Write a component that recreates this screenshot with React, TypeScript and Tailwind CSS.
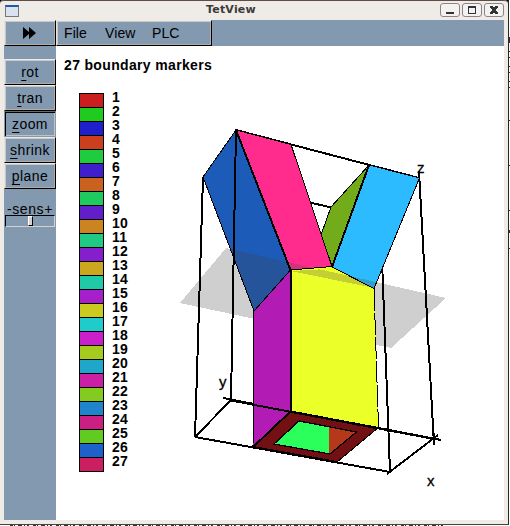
import React from 'react';

const MARKERS = [
  '#cb1f1f', '#1fcb1f', '#1f1fcb', '#cb3f1f', '#1fcb3f', '#3f1fcb', '#cb611f', '#1fcb61', '#611fcb',
  '#cb841f', '#1fcb84', '#841fcb', '#cba61f', '#1fcba6', '#a61fcb', '#cbcb1f', '#1fcbcb', '#cb1fcb',
  '#a6cb1f', '#1fa6cb', '#cb1fa6', '#84cb1f', '#1f84cb', '#cb1f84', '#61cb1f', '#1f61cb', '#cb1f61',
];

const RAISED = 'border border-t-[#eeeae5] border-l-[#e5e2de] border-r-black border-b-black shadow-[inset_1px_1px_0_#c9c9ca,inset_-1px_-1px_0_#b5aca5]';
const SUNKEN = 'border border-t-[#6b6866] border-l-[#8299b0] border-r-[#8299b0] border-b-[#8299b0] shadow-[inset_1px_1px_0_#000,inset_-1px_-1px_0_#c5c1bd]';

function TitleButton({ children }: { children: React.ReactNode }) {
  return (
    <div className="h-[14px] w-5 rounded-[3px] border border-[#8c8489] bg-[#f4f2f0]">
      <svg viewBox="0 0 18 12" width="18" height="12" shapeRendering="crispEdges">{children}</svg>
    </div>
  );
}

function TitleBar() {
  return (
    <div className="flex h-5 shrink-0 items-start rounded-t-[4px] border-t border-[#5f4c47] bg-[#efece8] pl-[5px] pr-[4px]">
      <div className="mt-1 h-3 w-[14px] border border-t-2 border-[#77777b] border-t-[#1d58ad] bg-[#dbe2ef]" />
      <div className="ml-[187px] mt-[2px] flex-1 font-['DejaVu_Sans'] text-[11px] font-bold leading-[14px] tracking-[0.2px] text-[#3c3a38]">TetView</div>
      <div className="mt-[2px] flex gap-[2px]">
        <TitleButton><path d="M5 8h8v2H5z" fill="#333" /></TitleButton>
        <TitleButton><path d="M5 2h8v8H5zM6 4v5h6V4z" fill="#333" fillRule="evenodd" /></TitleButton>
        <TitleButton><path d="M5 2h3v1h2V2h3v2h-1v1h-1v2h1v1h1v2h-3V9H8v1H5V8h1V7h1V5H6V4H5z" fill="#333" /></TitleButton>
      </div>
    </div>
  );
}

function MenuBar() {
  return (
    <div className="flex h-[26px] shrink-0 bg-[#8299b0]">
      <div className={`flex w-[52px] items-center justify-center ${RAISED}`}>
        <svg width="14" height="12" viewBox="0 0 14 12"><path d="M0 0l6 5V0l7 6-7 6V7l-6 5z" fill="#000" /></svg>
      </div>
      <div className={`flex w-[156px] items-center pl-[7px] text-[14px] tracking-[0.1px] ${RAISED}`}>
        <span className="w-[41px]">File</span>
        <span className="w-[47px]">View</span>
        <span>PLC</span>
      </div>
    </div>
  );
}

function ToolButton({ label, pressed }: { label: string; pressed?: boolean }) {
  return (
    <div className={`flex h-[26px] items-center justify-center text-[14px] tracking-[0.4px] ${pressed ? SUNKEN : RAISED}`}>
      <span>
        <span className="underline decoration-1 underline-offset-[3px]">{label[0]}</span>
        {label.slice(1)}
      </span>
    </div>
  );
}

function Sidebar() {
  return (
    <div className="flex w-[52px] shrink-0 flex-col bg-[#8299b0] pt-[13px]">
      <ToolButton label="rot" />
      <ToolButton label="tran" />
      <ToolButton label="zoom" pressed />
      <ToolButton label="shrink" />
      <ToolButton label="plane" />
      <div className="mt-[13px] h-[13px] text-center text-[14px] leading-[15px] tracking-[0.6px]">-sens+</div>
      <div className="mx-px h-3 border border-b-[#d5d2ce] border-l-black border-r-[#d5d2ce] border-t-black pl-[22px]">
        <div className="h-[10px] w-[5px] border border-b-black border-l-white border-r-black border-t-white bg-[#d5d2ce]" />
      </div>
    </div>
  );
}

function Legend() {
  return (
    <div className="w-[104px] shrink-0 pl-[23px] pt-[13px]">
      {MARKERS.map((c, i) => (
        <div key={c} className="flex h-[14px] items-start gap-2">
          <div className="h-[15px] w-[25px] shrink-0 border border-black" style={{ backgroundColor: c }} />
          <span className="-mt-[3px] text-[14px] font-bold leading-[14px] tracking-[0.2px]">{i + 1}</span>
        </div>
      ))}
    </div>
  );
}

function Scene() {
  return (
    <svg className="shrink-0" width="344" height="440" viewBox="160 80 344 440" shapeRendering="crispEdges">
      <defs>
        <clipPath id="blueFace"><path d="M236 130L203 177L254 311L290.500 270z" /></clipPath>
        <clipPath id="pinkFace"><path d="M236 130L291 144.500L332 266.500L290.500 270z" /></clipPath>
        <clipPath id="cyanFace"><path d="M369 165L419.500 178L374 288.500L332 267z" /></clipPath>
      </defs>
      {/* cutting plane */}
      <path d="M226 248L446 298L391 348L180 303z" fill="#cfcfcf" />
      {/* bounding box */}
      <g stroke="#000" strokeWidth="2" fill="none">
        <path d="M236 130L419 178M203 177L331 207.500M203 177L195 437M195 437L390 472M231 400L195 437" />
        <path d="M223 398L441 440M390 472L382 260M387 474L438 435M419 171L434 445" />
      </g>
      {/* upper faces */}
      <path d="M369 165L331 207L321 235L332 266z" fill="#72ac1b" stroke="#000" />
      <path d="M254 311L290.500 270L290.500 411L253 447z" fill="#b31bb5" stroke="#000" />
      <path d="M291 270L332 266.500L374 289L378.500 427.500L291 411z" fill="#ebff29" />
      <path d="M291 271L320 269.400L374 281.600V288L291 271z" fill="#c4cf33" />
      <path d="M291 270V411" stroke="#000" strokeWidth="2" />
      <path d="M374 289L378.500 427.500" stroke="#000" strokeWidth="1" strokeDasharray="22 2" />
      <path d="M236 130L203 177L254 311L290.500 270z" fill="#1c5bb7" />
      <path d="M226 248L446 298L391 348L180 303z" fill="#26549a" clipPath="url(#blueFace)" />
      <path d="M236 130L203 177L254 311L290.500 270z" fill="none" stroke="#000" />
      <path d="M236 130L291 144.500L332 266.500L290.500 270z" fill="#ff2b8d" />
      <path d="M226 248L446 298L391 348L180 303z" fill="#d33379" clipPath="url(#pinkFace)" />
      <path d="M236 130L291 144.500L332 266.500L290.500 270z" fill="none" stroke="#000" />
      <path d="M369 165L419.500 178L374 288.500L332 267z" fill="#2dbbff" />
      <path d="M226 248L446 298L391 348L180 303z" fill="#339dcb" clipPath="url(#cyanFace)" />
      <path d="M369 165L419.500 178L374 288.500L332 267z" fill="none" stroke="#000" />
      <path d="M236 130L290.500 270M369 165L332 267M236 130L231 400" stroke="#000" strokeWidth="2" />
      {/* base */}
      <path d="M291 411L378.500 427.500L337 462L253 447z" fill="#721013" stroke="#000" />
      <path d="M299 421L356.500 432L330 454L274 444z" fill="#2bff5c" />
      <path d="M329 426.800L356.500 432L330 454H329z" fill="#b5381b" />
      <path d="M299 421L356.500 432L330 454L274 444z" fill="none" stroke="#000" strokeWidth="1.300" />
      <path d="M231 400.500L434 439M253 447L337 462M291 411L253 447" stroke="#000" strokeWidth="2" />
      <path d="M434 433V445" stroke="#000" strokeWidth="2" />
      <g fontFamily="Liberation Sans, sans-serif" fontSize="15" fill="#000" stroke="#000" strokeWidth="0.300">
        <text x="417" y="173">z</text>
        <text x="219" y="387">y</text>
        <text x="427" y="486">x</text>
      </g>
    </svg>
  );
}

export default function App() {
  return (
    <div className="flex h-[526px] w-[510px] flex-col overflow-hidden bg-white font-['Liberation_Sans',sans-serif] text-black">
      <div className="flex h-[525px] shrink-0 bg-black">
        <div className="flex w-[508px] flex-col rounded-t-[4px] border-b border-[#4b4240] bg-[#efece8]">
          <TitleBar />
          <div className="ml-1 flex h-[500px] w-[500px] flex-col">
            <MenuBar />
            <div className="flex min-h-0 flex-1">
              <Sidebar />
              <div className="flex w-[448px] flex-col bg-white">
                <div className="h-[34px] shrink-0 whitespace-nowrap pl-2 pt-3 text-[14px] font-bold leading-[14px] tracking-[0.34px]">27 boundary markers</div>
                <div className="flex">
                  <Legend />
                  <Scene />
                </div>
              </div>
            </div>
          </div>
        </div>
        <div className="w-px bg-[#2b2725]" />
        <div className="w-px bg-white">
          <svg width="1" height="525" shapeRendering="crispEdges">
            <path d="M.5 37V43M.5 51V52M.5 57V58M.5 66V67M.5 72V73M.5 81V82M.5 87V88M.5 120V121M.5 165V166M.5 210V211M.5 230V233M.5 248V249" stroke="#333" />
          </svg>
        </div>
      </div>
      <svg width="510" height="1" shapeRendering="crispEdges">
        <path d="M10 .5H446" stroke="#333" strokeDasharray="3 1 1 3 4 2 1 2 2 4" />
      </svg>
    </div>
  );
}
